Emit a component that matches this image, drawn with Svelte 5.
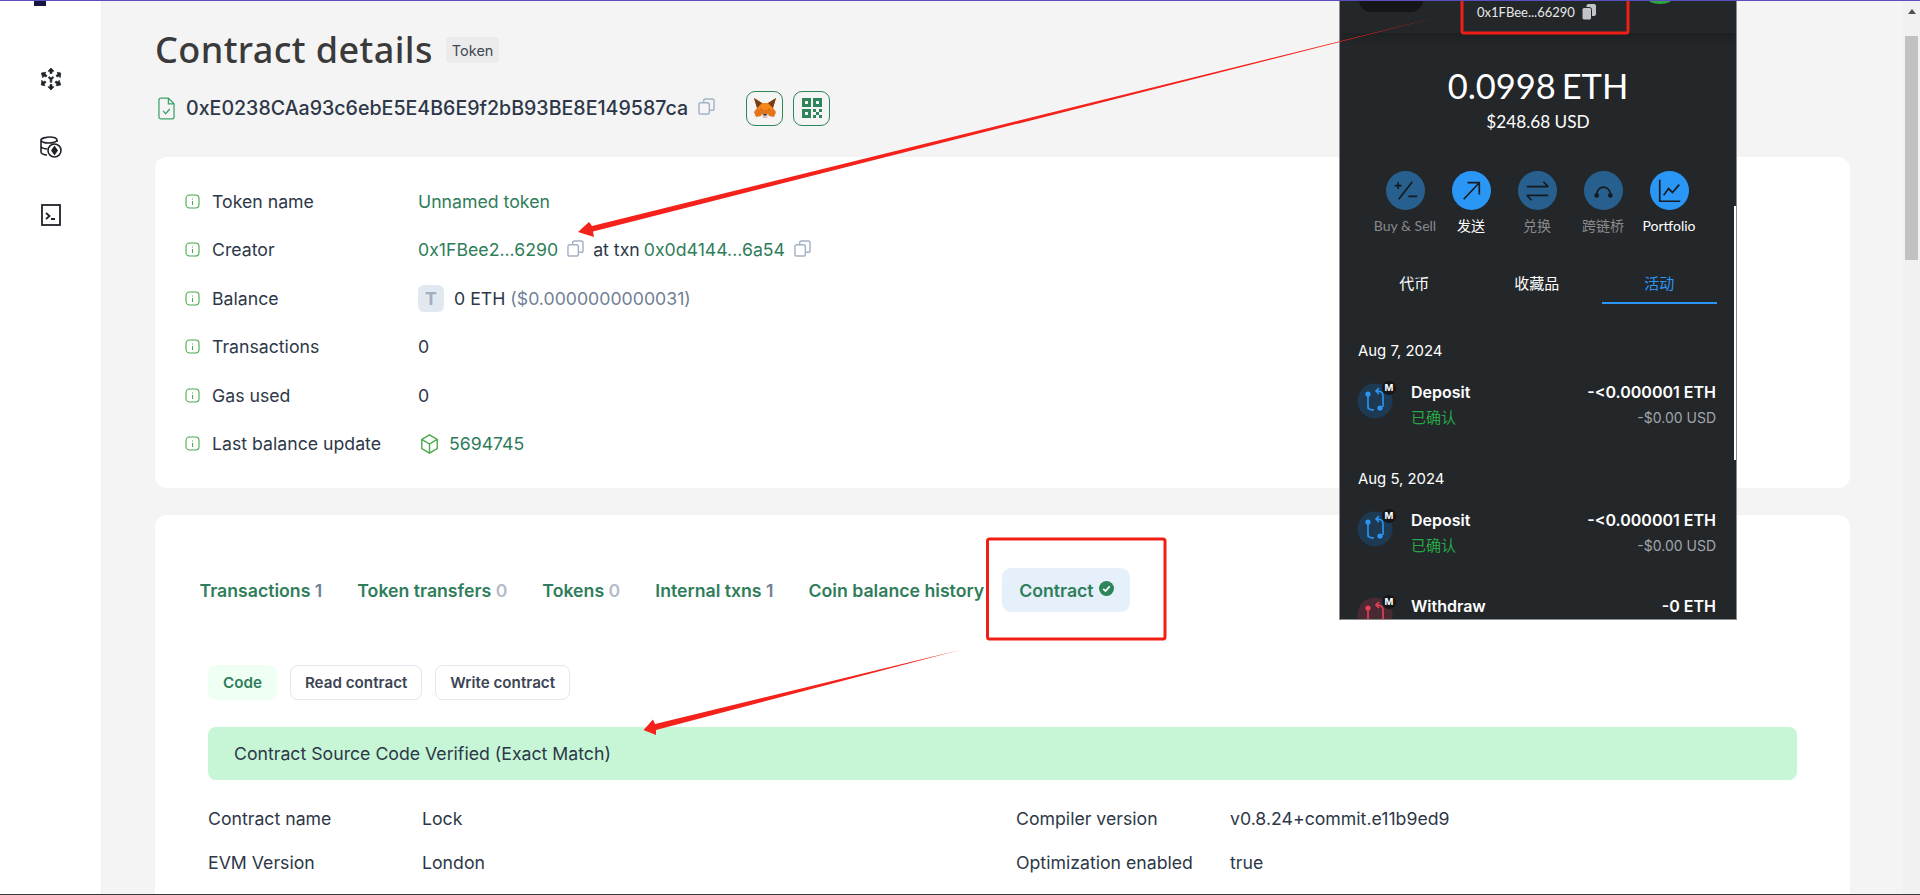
<script>
  const rows = [
    { label: 'Token name', kind: 'name' },
    { label: 'Creator', kind: 'creator' },
    { label: 'Balance', kind: 'balance' },
    { label: 'Transactions', kind: 'zero' },
    { label: 'Gas used', kind: 'zero' },
    { label: 'Last balance update', kind: 'block' }
  ];
  const tabs = [
    { name: 'Transactions', n: '1', dark: true },
    { name: 'Token transfers', n: '0' },
    { name: 'Tokens', n: '0' },
    { name: 'Internal txns', n: '1', dark: true },
    { name: 'Coin balance history', n: '' }
  ];
  const actions = [
    { label: 'Buy & Sell', on: false, d: 'M-11 -5h7M-7.500 -8.500v7M-7 9L7 -9M3 6h9' },
    { label: '发送', on: true, d: 'M-8 9L8 -8M-4 -8H8V4' },
    { label: '兑换', on: false, d: 'M-11 -4H11M6 -9l5 5M11 5H-11M-6 10l-5 -5' },
    { label: '跨链桥', on: false, d: 'M-7 4C-6 -6 6 -6 7 4' },
    { label: 'Portfolio', on: true, d: 'M-10 -11V11H11M-6 5L-1 -2L3 2L10 -6' }
  ];
  const txs = [
    { date: 'Aug 7, 2024', title: 'Deposit', amt: '-<0.000001 ETH', usd: '-$0.00 USD' },
    { date: 'Aug 5, 2024', title: 'Deposit', amt: '-<0.000001 ETH', usd: '-$0.00 USD' }
  ];
</script>

{#snippet copy()}
  <svg class="copy" viewBox="0 0 18 18" fill="none" stroke="#a3b1c6" stroke-width="1.5">
    <rect x="1" y="5" width="11" height="12" rx="2" />
    <path d="M6 5V3a2 2 0 0 1 2-2h7a2 2 0 0 1 2 2v8a2 2 0 0 1-2 2h-3" />
  </svg>
{/snippet}

{#snippet txIcon(color, bg)}
  <svg class="txicon" viewBox="0 0 44 44">
    <circle cx="18" cy="24" r="17.5" fill={bg} />
    <g fill="none" stroke={color} stroke-width="1.6">
      <path d="M11 17V32M20 14c4 0 6 1 6 5v11M22 11l-3 3 3 3M17 33c-4 0-6-.5-6-4" />
    </g>
    <circle cx="11" cy="17" r="2.6" fill={color} />
    <circle cx="23" cy="31" r="2.6" fill={color} />
    <circle cx="32" cy="11" r="7" fill="#141618" />
    <text x="32" y="14.4" class="m">M</text>
  </svg>
{/snippet}

<div class="page">
  <aside class="side">
    <span class="logo"></span>
    <nav class="nav">
      <svg viewBox="0 0 24 24" fill="#20222a" stroke="#20222a" stroke-width="0.7">
        <path d="M12 1l3 3.200h-2V6.500h-2V4.200H9zM12 23l-3-3.200h2v-2.300h2v2.300h2zM2.300 6l4.500-.8-.8 2 2 1.200-1 1.700-2-1.200-1.200 1.900zM21.700 6l-.5 4.800-1.200-1.900-2 1.200-1-1.700 2-1.200-.8-2zM2.300 18l.5-4.800 1.200 1.900 2-1.200 1 1.700-2 1.200.8 2zM21.700 18l-4.500.8.8-2-2-1.200 1-1.700 2 1.200 1.200-1.900zM11.200 12.500L9.200 10.700l1-1.100 1.800 1.500 1.800-1.500 1 1.100-2 1.800v2.800h-1.600z" />
      </svg>
      <svg viewBox="0 0 24 24" fill="none" stroke="#20222a" stroke-width="1.6">
        <path d="M18 7V5c0-1.700-3.500-3-7-3S2 3.300 2 5v12c0 1.700 3 3 6 3M2 5c0 1.700 3.500 3 7.500 3S18 6.700 18 5M2 11c0 1.500 2.500 2.700 6 3" />
        <circle cx="15.500" cy="15.500" r="6.500" />
        <path d="M15.500 12l2.500 3.500-2.500 3.500-2.500-3.500z" fill="#20222a" />
      </svg>
      <svg viewBox="0 0 24 24" fill="none" stroke="#20222a" stroke-width="1.8">
        <rect x="3" y="2" width="18" height="20" />
        <path d="M7 10l3.500 3L7 16M12 16h4" />
      </svg>
    </nav>
  </aside>

  <main class="main">
    <header class="title-row">
      <h1>Contract details</h1>
      <span class="tag">Token</span>
    </header>

    <div class="addr-row">
      <svg class="file" viewBox="0 0 18 24" fill="none" stroke="#38a169" stroke-width="1.300">
        <path d="M3 1h8l6 6v14a2 2 0 0 1-2 2H3a2 2 0 0 1-2-2V3a2 2 0 0 1 2-2zM11 1v6h6M5.500 14.500l2.500 3 4.500-5" />
      </svg>
      <span class="addr">0xE0238CAa93c6ebE5E4B6E9f2bB93BE8E149587ca</span>
      {@render copy()}
      <div class="addr-btns">
        <button class="square" aria-label="Add to MetaMask">
          <svg viewBox="0 0 24 22">
            <path fill="#e2761b" d="M1 1l3 10-3 4 2 5 5-1 1-2h6l1 2 5 1 2-5-3-4 3-10-8 5H9z" />
            <path fill="#f6851b" d="M4 11l5-5h6l5 5-4 3-2-1h-4l-2 1z" />
            <path fill="#763d16" d="M1 1l8 5-5 5zM23 1l-8 5 5 5z" />
            <path fill="#cd6116" d="M8 14l2-1-3-2zM16 14l-2-1 3-2z" />
            <path fill="#d7c1b3" d="M9 17h6l-1 4h-4z" />
            <path fill="#233447" d="M10 17h4l-1 1.500h-2z" />
          </svg>
        </button>
        <button class="square" aria-label="Show QR code">
          <svg viewBox="0 0 24 24" fill="#2f855a">
            <path fill-rule="evenodd" d="M2 2h9v9H2zM5 5v3h3V5zM13 2h9v9h-9zM16 5v3h3V5zM2 13h9v9H2zM5 16v3h3v-3z" />
            <path d="M13 13h3v3h-3zM19 13h3v3h-3zM16 16h3v3h-3zM13 19h3v3h-3zM19 19h3v3h-3z" />
          </svg>
        </button>
      </div>
    </div>

    <section class="card details">
      {#each rows as row}
        <div class="row">
          <svg class="info" viewBox="0 0 15 15" fill="none" stroke="#48a948" stroke-width="1.100">
            <rect x="1" y="1" width="13" height="13" rx="3.500" />
            <path d="M7.500 4.500v1M7.500 7v4" />
          </svg>
          <span class="label">{row.label}</span>
          <div class="value">
            {#if row.kind === 'name'}
              <a href="#top">Unnamed token</a>
            {:else if row.kind === 'creator'}
              <a href="#top">0x1FBee2...6290</a>
              {@render copy()}
              <span class="txn">at txn</span>
              <a href="#top">0x0d4144...6a54</a>
              {@render copy()}
            {:else if row.kind === 'balance'}
              <span class="avatar">T</span>
              <span class="eth">0 ETH</span>
              <span class="muted">($0.0000000000031)</span>
            {:else if row.kind === 'zero'}
              0
            {:else}
              <svg class="cube" viewBox="0 0 20 22" fill="none" stroke="#48a948" stroke-width="1.500">
                <path d="M10 1l8.500 5v10L10 21l-8.500-5V6zM1.500 6L10 11l8.500-5M10 11v10" />
              </svg>
              <a href="#top">5694745</a>
            {/if}
          </div>
        </div>
      {/each}
    </section>

    <section class="card contract">
      <div class="tabs">
        {#each tabs as t}
          <span class="tab">{t.name} <em class:dark={t.dark}>{t.n}</em></span>
        {/each}
        <span class="tab active">Contract
          <svg class="ok" viewBox="0 0 16 16">
            <circle cx="8" cy="8" r="8" fill="#2f855a" />
            <path d="M4.500 8.300l2.400 2.400 4.500-5" fill="none" stroke="#fff" stroke-width="1.800" />
          </svg>
        </span>
      </div>

      <div class="subtabs">
        <span class="sub on">Code</span>
        <span class="sub">Read contract</span>
        <span class="sub">Write contract</span>
      </div>

      <div class="verified">Contract Source Code Verified (Exact Match)</div>

      <div class="meta">
        <span>Contract name</span><span>Lock</span>
        <span>Compiler version</span><span>v0.8.24+commit.e11b9ed9</span>
        <span>EVM Version</span><span>London</span>
        <span>Optimization enabled</span><span>true</span>
      </div>
    </section>
  </main>

  <div class="scrollbar"><i></i><b></b></div>

  <div class="popup">
    <div class="pop-head">
      <span class="net"></span>
      <span class="acct">0x1FBee...66290
        <svg viewBox="0 0 14 16" fill="#c0c4c8">
          <rect x="4.500" y="0" width="9.500" height="12" rx="2" />
          <rect x="0" y="3.500" width="9.500" height="12.500" rx="2" stroke="#24272a" />
        </svg>
      </span>
      <span class="dots"></span>
    </div>
    <div class="bal">0.0998 ETH</div>
    <div class="usd">$248.68 USD</div>
    <div class="actions">
      {#each actions as a}
        <div class="act" class:on={a.on}>
          <svg viewBox="-20 -20 40 40">
            <circle r="20" fill={a.on ? '#2a96f5' : '#27608f'} />
            <path d={a.d} fill="none" stroke="#17191c" stroke-width="1.700" />
            {#if a.label === '跨链桥'}
              <circle cx="-7" cy="5" r="2.400" fill="#17191c" />
              <circle cx="7" cy="5" r="2.400" fill="#17191c" />
            {/if}
          </svg>
          <span>{a.label}</span>
        </div>
      {/each}
    </div>
    <div class="mm-tabs">
      <span>代币</span><span>收藏品</span><span class="sel">活动</span>
    </div>
    <div class="list">
      {#each txs as tx}
        <div class="date">{tx.date}</div>
        <div class="tx">
          {@render txIcon('#2a96f5', '#1d3a52')}
          <div class="tx-l"><strong>{tx.title}</strong><span class="conf">已确认</span></div>
          <div class="tx-r"><strong>{tx.amt}</strong><span>{tx.usd}</span></div>
        </div>
      {/each}
      <div class="tx last">
        {@render txIcon('#e8405a', '#4a2a32')}
        <div class="tx-l"><strong>Withdraw</strong></div>
        <div class="tx-r"><strong>-0 ETH</strong></div>
      </div>
    </div>
    <span class="pop-thumb"></span>
  </div>

  <svg class="marks" viewBox="0 0 1920 895" aria-hidden="true">
    <rect x="1462" y="-3" width="166" height="36" rx="2" fill="none" stroke="#f01e14" stroke-width="3" />
    <rect x="987.500" y="539" width="177.500" height="100" rx="2" fill="none" stroke="#f01e14" stroke-width="3" />
    <path fill="#f4221a" d="M1442 16L592 226 589 222 578 232 594 237 593 231.500Z" />
    <path fill="#f4221a" d="M960 650L655 724 653 719.500 643.500 730 656 735 656 730Z" />
  </svg>
  <span class="floor"></span>
</div>

<style>
  :global(body) {
    margin: 0;
    background: #f4f4f4;
  }
  .page {
    display: flex;
    height: 895px;
    overflow: hidden;
    position: relative;
    box-sizing: border-box;
    border-top: 1px solid #5a4fc0;
    font-family: Inter, "Noto Sans CJK SC", sans-serif;
    font-size: 17.700px;
    color: #2d3748;
    background: #f4f4f4;
  }
  .side {
    flex: 0 0 101px;
    background: #fff;
    position: relative;
    border-right: 1px solid #eeeeee;
  }
  .logo {
    display: block;
    width: 12px;
    height: 5px;
    margin-left: 34px;
    background: #1a1442;
  }
  .nav {
    display: flex;
    flex-direction: column;
    align-items: center;
    gap: 44px;
    margin-top: 61px;
  }
  .nav svg {
    width: 24px;
    height: 24px;
  }
  .main {
    flex: 0 0 1695px;
    margin-left: 53px;
  }
  .title-row {
    display: flex;
    align-items: center;
    gap: 13px;
    height: 40px;
    margin-top: 29px;
  }
  h1 {
    margin: 0;
    font-family: "Noto Sans", sans-serif;
    font-size: 36px;
    font-weight: 500;
    letter-spacing: 0.4px;
    line-height: 40px;
    color: #3a3a3a;
  }
  .tag {
    display: flex;
    align-items: center;
    height: 26px;
    padding: 0 6px;
    background: #ebebeb;
    border-radius: 4px;
    font-size: 14.500px;
    color: #3f4754;
  }
  .addr-row {
    display: flex;
    align-items: center;
    height: 36px;
    margin-top: 20px;
  }
  .file {
    width: 17px;
    height: 23px;
    margin-left: 3px;
    flex: none;
  }
  .addr {
    margin-left: 11px;
    font-size: 19.600px;
    font-weight: 500;
    color: #2d3748;
    white-space: nowrap;
  }
  .addr-row .copy {
    margin: -4px 0 0 10px;
  }
  .addr-btns {
    display: flex;
    gap: 10px;
    margin-left: 31px;
  }
  .square {
    width: 37px;
    height: 35px;
    padding: 0;
    display: grid;
    place-items: center;
    background: transparent;
    border: 1px solid #2f855a;
    border-radius: 9px;
  }
  .square svg {
    width: 24px;
    height: 24px;
  }
  .copy {
    width: 17px;
    height: 17px;
    flex: none;
  }
  .card {
    background: #fff;
    border-radius: 12px;
    box-sizing: border-box;
  }
  .details {
    display: flex;
    flex-direction: column;
    gap: 24.600px;
    height: 331px;
    margin-top: 31px;
    padding: 32px 30px;
  }
  .row {
    display: flex;
    align-items: center;
    height: 24px;
  }
  .info {
    width: 15px;
    height: 15px;
    flex: none;
  }
  .label {
    margin-left: 12px;
    width: 206px;
    flex: none;
    white-space: nowrap;
  }
  .value {
    display: flex;
    align-items: center;
    white-space: nowrap;
  }
  a {
    color: #2f7d5a;
    text-decoration: none;
  }
  .value .copy {
    margin: -3px 0 0 9px;
  }
  .txn {
    margin: 0 4px 0 9px;
  }
  .avatar {
    display: grid;
    place-items: center;
    width: 26px;
    height: 27px;
    border-radius: 6px;
    background: #e2e8f0;
    color: #a0aec0;
    font-weight: 700;
  }
  .eth {
    margin-left: 10px;
  }
  .muted {
    margin-left: 5px;
    color: #718096;
  }
  .cube {
    width: 19px;
    height: 20px;
    margin: 0 10px 0 2px;
  }
  .contract {
    height: 420px;
    margin-top: 27px;
    padding: 53px 53px 0;
  }
  .tabs {
    display: flex;
    align-items: center;
    height: 44px;
    margin-left: -8.500px;
    white-space: nowrap;
    font-weight: 600;
    color: #2f7d5a;
  }
  .tab {
    margin-right: 35px;
  }
  .tab em {
    font-style: normal;
    color: #b4bcc8;
  }
  .tab em.dark {
    color: #718096;
  }
  .tab:nth-child(5) {
    margin-right: 18px;
  }
  .active {
    display: flex;
    align-items: center;
    gap: 5px;
    height: 44px;
    padding: 0 16px 0 17px;
    margin: 0;
    border-radius: 9px;
    background: #e6f0fb;
  }
  .ok {
    width: 15px;
    height: 15px;
    margin-top: -4px;
  }
  .subtabs {
    display: flex;
    gap: 13px;
    margin-top: 53px;
    font-size: 15.200px;
    font-weight: 600;
  }
  .sub {
    display: flex;
    align-items: center;
    box-sizing: border-box;
    height: 35px;
    padding: 0 14px;
    border: 1px solid #e2e8f0;
    border-radius: 8px;
    color: #3c4554;
  }
  .sub.on {
    border-color: transparent;
    background: #f0fff4;
    color: #2f7d5a;
  }
  .verified {
    display: flex;
    align-items: center;
    height: 53px;
    margin-top: 27px;
    padding-left: 26px;
    border-radius: 8px;
    background: #c6f6d5;
  }
  .meta {
    display: grid;
    grid-template-columns: 214px 594px 214px 1fr;
    grid-auto-rows: 24px;
    row-gap: 20px;
    margin-top: 28px;
  }
  .scrollbar {
    position: absolute;
    top: 0;
    right: 0;
    width: 17px;
    height: 100%;
    background: #f1f1f1;
  }
  .scrollbar i {
    position: absolute;
    left: 5px;
    top: 8px;
    border: 4px solid transparent;
    border-top: 0;
    border-bottom: 5px solid #505050;
  }
  .scrollbar b {
    position: absolute;
    left: 2px;
    right: 2px;
    top: 35px;
    height: 224px;
    background: #c1c1c1;
  }
  .popup {
    position: absolute;
    left: 1339px;
    top: -1px;
    width: 398px;
    height: 620px;
    box-sizing: border-box;
    overflow: hidden;
    background: #24272a;
    color: #fff;
    border: 1px solid #8a8c8e;
    border-top: 0;
    font-family: Lato, "Noto Sans CJK SC", sans-serif;
  }
  .pop-head {
    position: relative;
    height: 33px;
    box-shadow: 0 3px 8px rgba(0, 0, 0, 0.25);
  }
  .net {
    position: absolute;
    left: 19px;
    top: -20px;
    width: 64px;
    height: 32px;
    border-radius: 12px;
    background: #141618;
  }
  .acct {
    position: absolute;
    left: 137px;
    top: 4px;
    display: flex;
    align-items: center;
    gap: 7px;
    font-size: 13px;
    white-space: nowrap;
    color: #e8e8e8;
  }
  .acct svg {
    width: 14px;
    height: 16px;
  }
  .dots {
    position: absolute;
    left: 308px;
    top: -6px;
    width: 24px;
    height: 10px;
    border-radius: 50%;
    background: #2ea83e;
  }
  .bal {
    margin-top: 34px;
    height: 38px;
    line-height: 38px;
    text-align: center;
    font-size: 34.500px;
    word-spacing: -3px;
  }
  .usd {
    margin-top: 6px;
    height: 22px;
    line-height: 22px;
    text-align: center;
    font-size: 17.200px;
  }
  .actions {
    display: grid;
    grid-template-columns: repeat(5, 66px);
    margin: 38px 0 0 32px;
  }
  .act {
    display: flex;
    flex-direction: column;
    align-items: center;
    color: #888a8c;
    font-size: 14px;
    white-space: nowrap;
  }
  .act.on {
    color: #fff;
  }
  .act svg {
    width: 39px;
    height: 39px;
  }
  .act span {
    margin-top: 6px;
    line-height: 20px;
  }
  .mm-tabs {
    display: grid;
    grid-template-columns: repeat(3, 122.500px);
    margin: 28px 0 0 13px;
    text-align: center;
    font-size: 15px;
  }
  .mm-tabs span {
    height: 40px;
    line-height: 38px;
    box-sizing: border-box;
  }
  .mm-tabs .sel {
    margin: 0 4px;
    color: #2a96f5;
    border-bottom: 2px solid #2a96f5;
  }
  .list {
    margin: 37px 20px 0 18px;
  }
  .date {
    font-family: Inter, sans-serif;
    font-size: 14.900px;
    height: 20px;
    line-height: 20px;
  }
  .tx {
    display: flex;
    align-items: flex-start;
    height: 88px;
    margin-top: 20px;
    position: relative;
  }
  .tx.last {
    margin-top: -2px;
  }
  .txicon {
    position: absolute;
    left: -1px;
    top: -4px;
    width: 44px;
    height: 44px;
  }
  .m {
    fill: #fff;
    font: 700 9.500px Inter, sans-serif;
    text-anchor: middle;
  }
  .tx-l,
  .tx-r {
    display: flex;
    flex-direction: column;
    font-family: Inter, "Noto Sans CJK SC", sans-serif;
  }
  .tx-l {
    margin-left: 53px;
  }
  .tx-l strong {
    font-size: 17.600px;
  }
  .tx-r {
    margin-left: auto;
    text-align: right;
  }
  .tx strong {
    font-size: 16px;
    font-weight: 600;
    line-height: 22px;
    white-space: nowrap;
  }
  .tx span {
    margin-top: 4px;
    font-size: 14px;
    line-height: 22px;
    color: #a0a4a8;
  }
  .tx .conf {
    font-size: 15px;
    color: #28a745;
  }
  .pop-thumb {
    position: absolute;
    right: 0;
    top: 206px;
    width: 2px;
    height: 254px;
    background: #fff;
  }
  .marks {
    position: absolute;
    left: 0;
    top: -1px;
    width: 1920px;
    height: 895px;
    pointer-events: none;
  }
  .floor {
    position: absolute;
    left: 0;
    right: 0;
    bottom: 0;
    height: 1px;
    background: #3a3a3a;
  }
</style>
